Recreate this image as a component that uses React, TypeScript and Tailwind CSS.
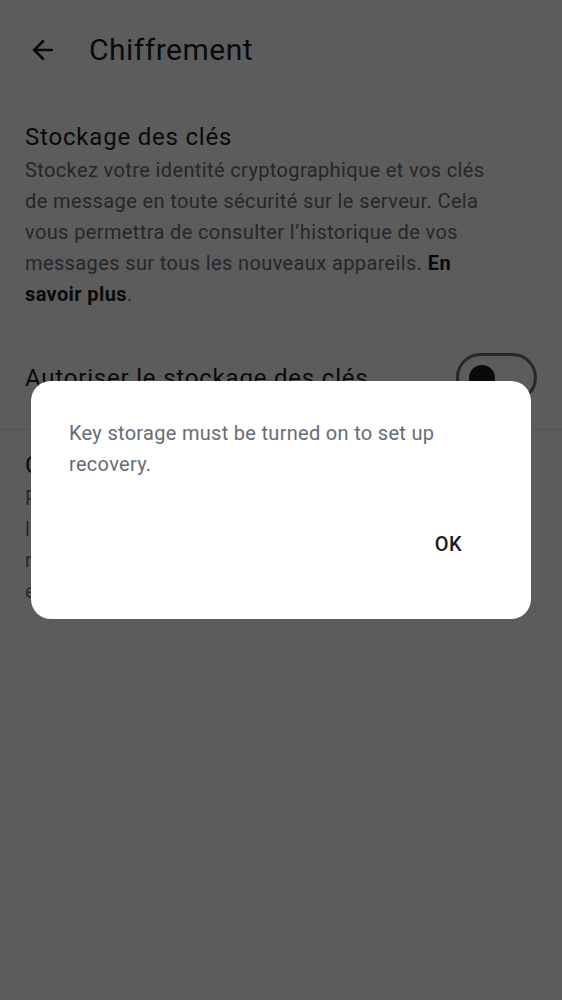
import { ArrowLeft } from 'lucide-react';

const font = { fontFamily: 'Roboto, "Noto Sans", sans-serif' };

const App = () => {
  return (
    <div className="relative w-full min-h-screen bg-white overflow-hidden" style={font}>
      <header className="h-[100px] flex items-center px-[28px] gap-[31px] bg-white">
        <ArrowLeft className="w-[30px] h-[30px] text-[#1b1d22]" strokeWidth={2.1} />
        <h1 className="text-[30px] leading-none tracking-[0.5px] text-[#1b1d22]">Chiffrement</h1>
      </header>

      <section className="pl-[25px] pr-[52px] pt-[22px]">
        <div className="text-[24px] leading-[30px] tracking-[0.8px] text-[#1b1d22]">Stockage des clés</div>
        <p className="mt-[3px] text-[20px] leading-[31px] tracking-[0.38px] text-[#656d77]">
          Stockez votre identité cryptographique et vos clés de message en toute sécurité sur le
          serveur. Cela vous permettra de consulter l’historique de vos messages sur tous les
          nouveaux appareils. <span className="font-bold text-[#1b1d22]">En savoir plus</span>.
        </p>
      </section>

      <div className="mt-[16px] px-[25px] h-[104px] flex items-center justify-between border-b border-[#e1e6ec]">
        <span className="text-[24px] tracking-[0.8px] text-[#1b1d22]">Autoriser le stockage des clés</span>
        <div className="w-[81px] h-[49px] rounded-full border-[3px] border-[#656d77] flex items-center pl-[10px]">
          <div className="w-[26px] h-[26px] rounded-full bg-[#1b1d22]" />
        </div>
      </div>

      <section className="pl-[25px] pr-[52px] pt-[20px]">
        <div className="text-[24px] leading-[30px] tracking-[0.8px] text-[#1b1d22]">Configurer la récupération</div>
        <p className="mt-[3px] text-[20px] leading-[31px] tracking-[0.38px] text-[#656d77]">
          Protégez votre compte et vos messages chiffrés lorsque vous perdez l’accès à vos
          appareils, et récupérez votre identité et tout votre historique enregistré sur le
          serveur.
        </p>
      </section>

      <div className="absolute inset-0 bg-black/[0.64] flex items-center justify-center">
        <div className="w-[500px] h-[238px] bg-white rounded-[20px] pl-[38px] pr-[53px] pt-[37px] flex flex-col">
          <p className="text-[20px] leading-[31px] tracking-[0.3px] text-[#656d77]">
            Key storage must be turned on to set up recovery.
          </p>
          <div className="mt-[40px] flex justify-end">
            <button className="h-[48px] px-[16px] text-[20px] font-medium tracking-[0.45px] text-[#1b1d22]">OK</button>
          </div>
        </div>
      </div>
    </div>
  );
};

export default App;
